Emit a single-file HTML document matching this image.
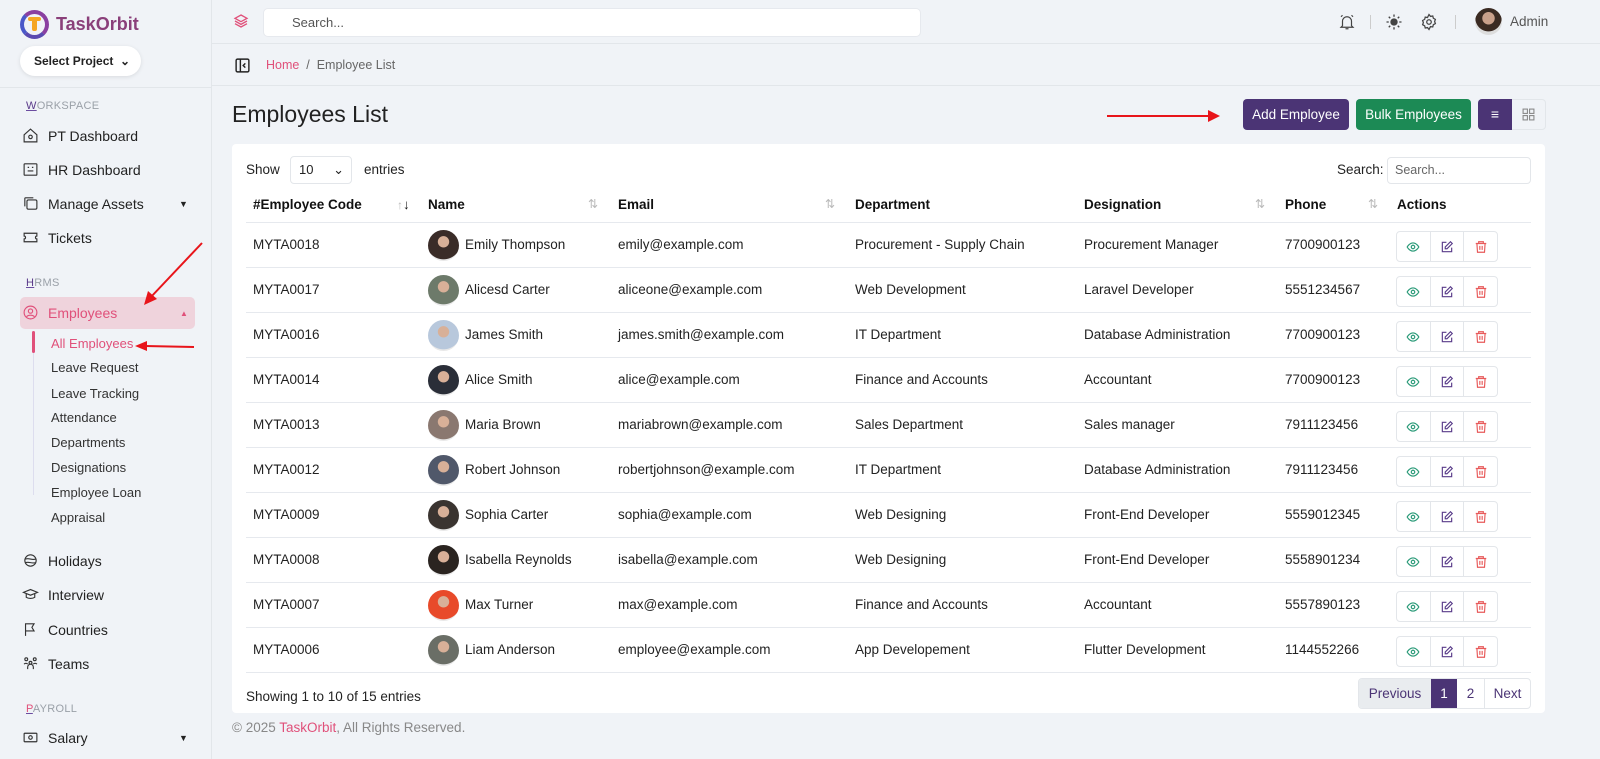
<!DOCTYPE html>
<html><head><meta charset="utf-8">
<style>
*{box-sizing:border-box;margin:0;padding:0}
body{width:1600px;height:759px;overflow:hidden;background:#f0f3f7;font-family:"Liberation Sans",sans-serif;color:#222;font-size:14px;position:relative}
.abs{position:absolute}
.sb{left:0;top:0;width:212px;height:759px;border-right:1px solid #e2e6ea;background:#f0f3f7}
.sec{font-size:11px;color:#9aa0a8;letter-spacing:.3px;left:26px}
.sec u{color:#5a3a8a;text-decoration-color:#6b4ca0}
.nav{left:22px;font-size:14px;color:#222;display:flex;align-items:center;gap:9px}
.nav svg{width:17px;height:17px;stroke:#333;fill:none;stroke-width:1.6}
.sub{left:51px;font-size:13px;color:#333}
.hdr{left:212px;top:0;right:0;height:44px;border-bottom:1px solid #e2e6ea}
.bc{left:212px;top:44px;right:0;height:42px;border-bottom:1px solid #e2e6ea}
.card{left:232px;top:144px;width:1313px;height:569px;background:#fff;border-radius:4px}
.th{top:197px;font-weight:bold;font-size:13.5px;color:#111}
.row{left:246px;width:1285px;height:45px;border-top:1px solid #e6e9ee}
.row span{position:absolute;top:14px;font-size:13.5px;color:#222;white-space:nowrap}
.av{position:absolute;left:182px;top:7px;width:31px;height:31px;border-radius:50%}
.act{position:absolute;left:1150px;top:8px;width:102px;height:31px;border:1px solid #e3e6ea;border-radius:4px;display:flex}
.act div{flex:1;display:flex;align-items:center;justify-content:center;border-right:1px solid #e3e6ea}
.act div:last-child{border-right:none}
.sort{color:#bbb;font-size:12px;font-weight:normal}
</style></head><body>
<div class="abs sb"></div>
<!-- logo -->
<div class="abs" style="left:20px;top:10px;width:29px;height:29px;border-radius:50%;border:4px solid #8a3fa0;border-left-color:#4a58c8;border-bottom-color:#5a4ab0"></div>
<div class="abs" style="left:28px;top:17px;width:13px;height:4px;background:#f5a623;border-radius:2px"></div>
<div class="abs" style="left:32px;top:19px;width:5px;height:12px;background:#f5a623;border-radius:2px"></div>
<div class="abs" style="left:56px;top:14px;font-size:18px;font-weight:bold;color:#8a3f7a">TaskOrbit</div>
<div class="abs" style="left:20px;top:46px;width:121px;height:30px;background:#fff;border-radius:15px;box-shadow:0 1px 4px rgba(0,0,0,.1);font-size:12px;font-weight:bold;line-height:30px;padding-left:14px">Select Project &nbsp;⌄</div>
<div class="abs" style="left:0;top:87px;width:212px;border-top:1px solid #e2e6ea"></div>
<div class="abs sec" style="top:100px"><u>W</u>ORKSPACE</div>
<div class="abs nav" style="top:127px"><svg viewBox="0 0 24 24"><path d="M3 11l9-8 9 8v10H3z"/><circle cx="12" cy="14" r="2.5"/></svg>PT Dashboard</div>
<div class="abs nav" style="top:161px"><svg viewBox="0 0 24 24"><rect x="3" y="4" width="18" height="16" rx="1"/><path d="M8 9h2M14 9h2M8 14h8"/></svg>HR Dashboard</div>
<div class="abs nav" style="top:195px"><svg viewBox="0 0 24 24"><rect x="7" y="7" width="14" height="13" rx="2"/><path d="M4 16V5a1 1 0 011-1h11"/></svg>Manage Assets</div>
<div class="abs" style="left:179px;top:199px;font-size:9px">▼</div>
<div class="abs nav" style="top:229px"><svg viewBox="0 0 24 24"><path d="M3 6h18v4a2 2 0 000 4v4H3v-4a2 2 0 000-4z"/></svg>Tickets</div>
<div class="abs sec" style="top:277px"><u>H</u>RMS</div>
<div class="abs" style="left:20px;top:297px;width:175px;height:32px;background:#efd3dc;border-radius:5px"></div>
<div class="abs nav" style="top:304px;color:#e0507a"><svg viewBox="0 0 24 24" style="stroke:#e0507a"><circle cx="12" cy="12" r="9"/><circle cx="12" cy="10" r="3"/><path d="M6.5 18c2-3 9-3 11 0"/></svg>Employees</div>
<div class="abs" style="left:180px;top:309px;font-size:8px;color:#e0507a">▲</div>
<div class="abs" style="left:33px;top:338px;width:1px;height:157px;background:#dde"></div>
<div class="abs" style="left:32px;top:331px;width:3px;height:22px;background:#e0507a;border-radius:2px"></div>
<div class="abs sub" style="top:336px;color:#e0507a">All Employees</div>
<div class="abs sub" style="top:360px">Leave Request</div>
<div class="abs sub" style="top:386px">Leave Tracking</div>
<div class="abs sub" style="top:410px">Attendance</div>
<div class="abs sub" style="top:435px">Departments</div>
<div class="abs sub" style="top:460px">Designations</div>
<div class="abs sub" style="top:485px">Employee Loan</div>
<div class="abs sub" style="top:510px">Appraisal</div>
<div class="abs nav" style="top:552px"><svg viewBox="0 0 24 24"><circle cx="12" cy="12" r="8"/><path d="M5 10c5-2 9 2 14 0M5 15c5-2 9 2 14 0"/></svg>Holidays</div>
<div class="abs nav" style="top:586px"><svg viewBox="0 0 24 24"><path d="M2 9l10-4 10 4-10 4z"/><path d="M6 11v5c3 2 9 2 12 0v-5"/></svg>Interview</div>
<div class="abs nav" style="top:621px"><svg viewBox="0 0 24 24"><path d="M5 21V4h12l-3 5 3 5H5"/></svg>Countries</div>
<div class="abs nav" style="top:655px"><svg viewBox="0 0 24 24"><circle cx="6" cy="6" r="2"/><circle cx="18" cy="6" r="2"/><circle cx="12" cy="11" r="2"/><path d="M8 20v-3a4 4 0 018 0v3M3 13a3 3 0 015 0M16 13a3 3 0 015 0"/></svg>Teams</div>
<div class="abs sec" style="top:703px"><u style="color:#e0507a">P</u>AYROLL</div>
<div class="abs nav" style="top:729px"><svg viewBox="0 0 24 24"><rect x="3" y="6" width="18" height="12" rx="1"/><circle cx="12" cy="12" r="2.5"/></svg>Salary</div>
<div class="abs" style="left:179px;top:733px;font-size:9px">▼</div>

<!-- header -->
<div class="abs hdr"></div>
<svg class="abs" style="left:233px;top:13px" width="16" height="16" viewBox="0 0 24 24" fill="none" stroke="#e0507a" stroke-width="2"><path d="M12 3l9 5-9 5-9-5z"/><path d="M3 12l9 5 9-5M3 16l9 5 9-5"/></svg>
<div class="abs" style="left:263px;top:8px;width:658px;height:29px;background:#fff;border-radius:5px;border:1px solid #e6e9ee;font-size:13px;color:#555;line-height:27px;padding-left:28px">Search...</div>
<svg class="abs" style="left:1338px;top:13px" width="18" height="18" viewBox="0 0 24 24" fill="none" stroke="#444" stroke-width="1.6"><path d="M6 17V11a6 6 0 0112 0v6l2 2H4z"/><path d="M10 21h4M4 5l2-2M20 5l-2-2"/></svg>
<div class="abs" style="left:1370px;top:15px;width:1px;height:14px;background:#ccc"></div>
<svg class="abs" style="left:1385px;top:13px" width="18" height="18" viewBox="0 0 24 24" fill="none" stroke="#444" stroke-width="1.8"><circle cx="12" cy="12" r="4" fill="#444"/><path d="M12 2v3M12 19v3M2 12h3M19 12h3M5 5l2 2M17 17l2 2M5 19l2-2M17 7l2-2"/></svg>
<svg class="abs" style="left:1420px;top:13px" width="18" height="18" viewBox="0 0 24 24" fill="none" stroke="#444" stroke-width="1.7"><circle cx="12" cy="12" r="3"/><path d="M12 2l2 2.5 3-.5.8 3 2.7 1.5-1 2.8 1 2.8-2.7 1.5-.8 3-3-.5L12 22l-2-2.5-3 .5-.8-3L3.5 15.6l1-2.8-1-2.8L6.2 8.5 7 5.5l3 .5z"/></svg>
<div class="abs" style="left:1455px;top:15px;width:1px;height:14px;background:#ccc"></div>
<div class="abs" style="left:1475px;top:8px;width:27px;height:27px;border-radius:50%;background:radial-gradient(circle at 50% 38%,#c9a08a 0 28%,#3a2a22 30% 60%,#ddd 62%)"></div>
<div class="abs" style="left:1510px;top:14px;font-size:13.5px;color:#555">Admin</div>

<!-- breadcrumb -->
<div class="abs bc"></div>
<svg class="abs" style="left:234px;top:57px" width="17" height="17" viewBox="0 0 24 24" fill="none" stroke="#222" stroke-width="2"><rect x="3" y="3" width="18" height="18" rx="2"/><path d="M9 3v18M16 9l-3 3 3 3"/></svg>
<div class="abs" style="left:266px;top:58px;font-size:12.5px;color:#e0507a">Home <span style="color:#666">&nbsp;/&nbsp; Employee List</span></div>

<div class="abs" style="left:232px;top:101px;font-size:23px;color:#222">Employees List</div>
<div class="abs" style="left:1107px;top:115px;width:105px;height:2px;background:#e8141a"></div>
<div class="abs" style="left:1208px;top:110px;width:0;height:0;border-left:12px solid #e8141a;border-top:6px solid transparent;border-bottom:6px solid transparent"></div>
<div class="abs" style="left:1243px;top:99px;width:106px;height:31px;background:#4b3475;border-radius:4px;color:#fff;font-size:13.5px;line-height:31px;text-align:center">Add Employee</div>
<div class="abs" style="left:1356px;top:99px;width:115px;height:31px;background:#1c8a55;border-radius:4px;color:#fff;font-size:13.5px;line-height:31px;text-align:center">Bulk Employees</div>
<div class="abs" style="left:1478px;top:99px;width:68px;height:31px;border:1px solid #e2e6ea;border-radius:4px;background:#f0f3f7"></div>
<div class="abs" style="left:1478px;top:99px;width:34px;height:31px;background:#4b3475;border-radius:4px 0 0 4px;color:#fff;text-align:center;line-height:30px;font-size:14px">≡</div>
<svg class="abs" style="left:1522px;top:108px" width="13" height="13" viewBox="0 0 12 12" fill="none" stroke="#888"><rect x="1" y="1" width="4" height="4"/><rect x="7" y="1" width="4" height="4"/><rect x="1" y="7" width="4" height="4"/><rect x="7" y="7" width="4" height="4"/></svg>

<div class="abs card"></div>
<div class="abs" style="left:246px;top:162px;font-size:13.5px">Show</div>
<div class="abs" style="left:290px;top:156px;width:62px;height:28px;border:1px solid #e3e6ea;border-radius:4px;font-size:13px;line-height:26px;padding-left:8px">10 <span style="margin-left:16px">⌄</span></div>
<div class="abs" style="left:364px;top:162px;font-size:13.5px">entries</div>
<div class="abs" style="left:1337px;top:162px;font-size:13.5px">Search:</div>
<div class="abs" style="left:1387px;top:157px;width:144px;height:27px;border:1px solid #e3e6ea;border-radius:4px;font-size:12.5px;color:#666;line-height:25px;padding-left:7px">Search...</div>

<div class="abs th" style="left:253px">#Employee Code</div><div class="abs th" style="left:397px"><span class="sort">↑</span><span style="font-weight:bold">↓</span></div>
<div class="abs th" style="left:428px">Name</div><div class="abs th sort" style="left:588px">⇅</div>
<div class="abs th" style="left:618px">Email</div><div class="abs th sort" style="left:825px">⇅</div>
<div class="abs th" style="left:855px">Department</div>
<div class="abs th" style="left:1084px">Designation</div><div class="abs th sort" style="left:1255px">⇅</div>
<div class="abs th" style="left:1285px">Phone</div><div class="abs th sort" style="left:1368px">⇅</div>
<div class="abs th" style="left:1397px">Actions</div>

<div id="rows"></div>
<div class="abs" style="left:246px;top:672px;width:1285px;border-top:1px solid #e6e9ee"></div>

<div class="abs" style="left:246px;top:689px;font-size:13.5px">Showing 1 to 10 of 15 entries</div>
<div class="abs" style="left:1358px;top:678px;width:173px;height:31px;border:1px solid #e3e6ea;border-radius:4px;display:flex;font-size:13.5px;color:#4b3475;line-height:29px;overflow:hidden">
<div style="width:72px;background:#e9ecef;text-align:center">Previous</div>
<div style="width:26px;background:#4b3475;color:#fff;text-align:center">1</div>
<div style="width:28px;text-align:center;border-right:1px solid #e3e6ea">2</div>
<div style="flex:1;text-align:center">Next</div></div>
<div class="abs" style="left:232px;top:720px;font-size:13.5px;color:#888">© 2025 <span style="color:#e0507a">TaskOrbit</span>, All Rights Reserved.</div>

<!-- red arrows sidebar -->
<svg class="abs" style="left:0;top:0" width="212" height="360"><line x1="202" y1="243" x2="150" y2="298" stroke="#e8141a" stroke-width="2"/><polygon points="144,305 148,291 157,299" fill="#e8141a"/><line x1="194" y1="347" x2="145" y2="346" stroke="#e8141a" stroke-width="2"/><polygon points="135,346 147,341 147,351" fill="#e8141a"/></svg>

<script>
var d=[["MYTA0018","Emily Thompson","emily@example.com","Procurement - Supply Chain","Procurement Manager","7700900123","#3a2c28"],
["MYTA0017","Alicesd Carter","aliceone@example.com","Web Development","Laravel Developer","5551234567","#6d7a6a"],
["MYTA0016","James Smith","james.smith@example.com","IT Department","Database Administration","7700900123","#b8c8dc"],
["MYTA0014","Alice Smith","alice@example.com","Finance and Accounts","Accountant","7700900123","#2a2e38"],
["MYTA0013","Maria Brown","mariabrown@example.com","Sales Department","Sales manager","7911123456","#8a7870"],
["MYTA0012","Robert Johnson","robertjohnson@example.com","IT Department","Database Administration","7911123456","#50586a"],
["MYTA0009","Sophia Carter","sophia@example.com","Web Designing","Front-End Developer","5559012345","#3a3430"],
["MYTA0008","Isabella Reynolds","isabella@example.com","Web Designing","Front-End Developer","5558901234","#2a2420"],
["MYTA0007","Max Turner","max@example.com","Finance and Accounts","Accountant","5557890123","#e84a2a"],
["MYTA0006","Liam Anderson","employee@example.com","App Developement","Flutter Development","1144552266","#6a6e66"]];
var h="";
var eye='<svg width="14" height="14" viewBox="0 0 24 24" fill="none" stroke="#2a9a78" stroke-width="2"><path d="M2 12s4-7 10-7 10 7 10 7-4 7-10 7S2 12 2 12z"/><circle cx="12" cy="12" r="3"/></svg>';
var ed='<svg width="14" height="14" viewBox="0 0 24 24" fill="none" stroke="#5a3d8a" stroke-width="2"><path d="M11 4H4v16h16v-7"/><path d="M18 3l3 3-9 9H9v-3z"/></svg>';
var tr='<svg width="14" height="14" viewBox="0 0 24 24" fill="none" stroke="#e85a5a" stroke-width="2"><path d="M3 6h18M8 6V3h8v3M5 6l1 15h12l1-15M10 10v7M14 10v7"/></svg>';
d.forEach(function(r,i){var t=222+i*45;
h+='<div class="abs row" style="top:'+t+'px"><span style="left:7px">'+r[0]+'</span><div class="av" style="background:radial-gradient(circle at 50% 38%,#d8b098 0 22%,'+r[6]+' 24% 70%,#e8e8e8 72%)"></div><span style="left:219px">'+r[1]+'</span><span style="left:372px">'+r[2]+'</span><span style="left:609px">'+r[3]+'</span><span style="left:838px">'+r[4]+'</span><span style="left:1039px">'+r[5]+'</span><div class="act"><div>'+eye+'</div><div>'+ed+'</div><div>'+tr+'</div></div></div>';});
document.getElementById("rows").innerHTML=h;
</script>
</body></html>
